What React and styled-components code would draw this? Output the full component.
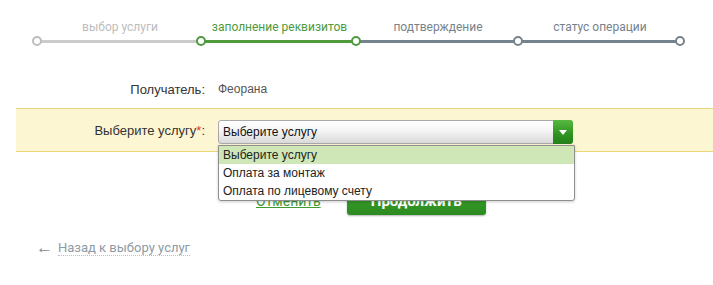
import React from "react";
import styled, { createGlobalStyle } from "styled-components";

const GlobalStyle = createGlobalStyle`
  body {
    margin: 0;
    background: #fff;
    font-family: "Liberation Sans", Arial, sans-serif;
  }
`;

const Page = styled.div`
  width: 713px;
  height: 285px;
  position: relative;
  overflow: hidden;
`;

const Stepper = styled.div`
  display: flex;
  padding: 20px 0 0 37px;
  height: 28px;
`;

const Step = styled.div`
  position: relative;
  width: ${(p) => p.$w}px;
  display: flex;
  flex-direction: column;
  align-items: center;
`;

const StepLabel = styled.div`
  font-family: Roboto, "Liberation Sans", sans-serif;
  font-size: 12px;
  line-height: 14px;
  color: ${(p) => p.$color};
  margin-left: 2px;
`;

const StepLine = styled.div`
  margin-top: 6px;
  width: 100%;
  height: 3px;
  background: ${(p) => p.$color};
`;

const Node = styled.span`
  position: absolute;
  top: 16px;
  ${(p) => (p.$end ? "right: -5px;" : "left: -5px;")}
  width: 6px;
  height: 6px;
  border-radius: 50%;
  border: 2px solid ${(p) => p.$color};
  background: #fff;
`;

const Form = styled.div`
  margin-top: 34px;
`;

const Row = styled.div`
  display: grid;
  grid-template-columns: 205px 1fr;
  column-gap: 13px;
  align-items: center;
  font-size: 13px;
  line-height: 15px;
  color: #333;
`;

const Label = styled.div`
  text-align: right;
`;

const Value = styled.div`
  color: #555;
  font-size: 12px;
`;

const Band = styled.div`
  margin: 11px 0 0 16px;
  height: 42px;
  background: #fdf6d2;
  border-top: 1px solid #ecd77a;
  border-bottom: 1px solid #ecd77a;
  display: grid;
  grid-template-columns: 189px 1fr;
  column-gap: 13px;
  align-items: center;
  font-size: 13px;
  color: #333;
`;

const Star = styled.span`
  color: #d33;
`;

const SelectWrap = styled.div`
  position: relative;
  width: 355px;
  margin-top: 4px;
`;

const SelectBox = styled.div`
  height: 22px;
  border: 1px solid #a9a9a9;
  border-radius: 3px;
  background: linear-gradient(#fff 0%, #f4f4f4 45%, #d9d9d9 100%);
  display: flex;
  align-items: center;
  padding-left: 4px;
  font-size: 12px;
  color: #111;
  position: relative;
`;

const Arrow = styled.div`
  position: absolute;
  right: -1px;
  top: -1px;
  width: 20px;
  height: 24px;
  border-radius: 0 3px 3px 0;
  background: linear-gradient(#55b93f, #2e9320 60%, #23811a);
  display: flex;
  align-items: center;
  justify-content: center;
  &::after {
    content: "";
    border-left: 4px solid transparent;
    border-right: 4px solid transparent;
    border-top: 5px solid #fff;
  }
`;

const Dropdown = styled.ul`
  position: absolute;
  left: 0;
  top: 25px;
  width: 355px;
  margin: 0;
  padding: 0;
  list-style: none;
  background: #fff;
  border: 1px solid #8f8f8f;
  border-radius: 0 0 3px 3px;
  box-shadow: 0 1px 3px rgba(0, 0, 0, 0.2);
  z-index: 2;
`;

const Option = styled.li`
  height: 18px;
  line-height: 18px;
  padding-left: 4px;
  font-size: 12px;
  color: #222;
  background: ${(p) => (p.$active ? "#cfe7b6" : "transparent")};
`;

const Actions = styled.div`
  display: flex;
  align-items: center;
  margin: 35px 0 0 256px;
  gap: 26px;
`;

const Cancel = styled.a`
  font-family: Roboto, "Liberation Sans", sans-serif;
  font-size: 14px;
  color: #3f9a32;
  text-decoration: underline;
`;

const Submit = styled.button`
  width: 139px;
  height: 28px;
  border: none;
  border-radius: 3px;
  background: linear-gradient(#3ea52f, #2b8a20);
  box-shadow: 0 1px 2px rgba(0, 0, 0, 0.3);
  color: #fff;
  font-family: Roboto, "Liberation Sans", sans-serif;
  font-weight: bold;
  font-size: 15px;
`;

const Back = styled.div`
  margin: 26px 0 0 36px;
  font-family: Roboto, "Liberation Sans", sans-serif;
  font-size: 13px;
  color: #8c9aa4;
  display: flex;
  align-items: center;
  gap: 5px;
`;

const BackArrow = styled.span`
  font-size: 17px;
  line-height: 14px;
  margin-top: -3px;
  color: #7d8a93;
`;

const BackText = styled.span`
  border-bottom: 1px dotted #b5c0c7;
  line-height: 14px;
`;

const steps = [
  { label: "выбор услуги", w: 164, line: "#cbcbcb", text: "#bdbdbd", node: "#bdbdbd" },
  { label: "заполнение реквизитов", w: 155, line: "#4e9a3d", text: "#4e9a3d", node: "#4e9a3d" },
  { label: "подтверждение", w: 162, line: "#76838c", text: "#76838c", node: "#4e9a3d" },
  { label: "статус операции", w: 162, line: "#76838c", text: "#76838c", node: "#76838c" },
];

export default function App() {
  return (
    <Page>
      <GlobalStyle />
      <Stepper>
        {steps.map((s, i) => (
          <Step key={s.label} $w={s.w}>
            <StepLabel $color={s.text}>{s.label}</StepLabel>
            <StepLine $color={s.line} />
            <Node $color={s.node} />
            {i === steps.length - 1 && <Node $end $color={s.node} />}
          </Step>
        ))}
      </Stepper>
      <Form>
        <Row>
          <Label>Получатель:</Label>
          <Value>Феорана</Value>
        </Row>
        <Band>
          <Label>
            Выберите услугу<Star>*</Star>:
          </Label>
          <SelectWrap>
            <SelectBox>
              Выберите услугу
              <Arrow />
            </SelectBox>
            <Dropdown>
              <Option $active>Выберите услугу</Option>
              <Option>Оплата за монтаж</Option>
              <Option>Оплата по лицевому счету</Option>
            </Dropdown>
          </SelectWrap>
        </Band>
        <Actions>
          <Cancel href="#">Отменить</Cancel>
          <Submit>Продолжить</Submit>
        </Actions>
        <Back>
          <BackArrow>←</BackArrow>
          <BackText>Назад к выбору услуг</BackText>
        </Back>
      </Form>
    </Page>
  );
}
